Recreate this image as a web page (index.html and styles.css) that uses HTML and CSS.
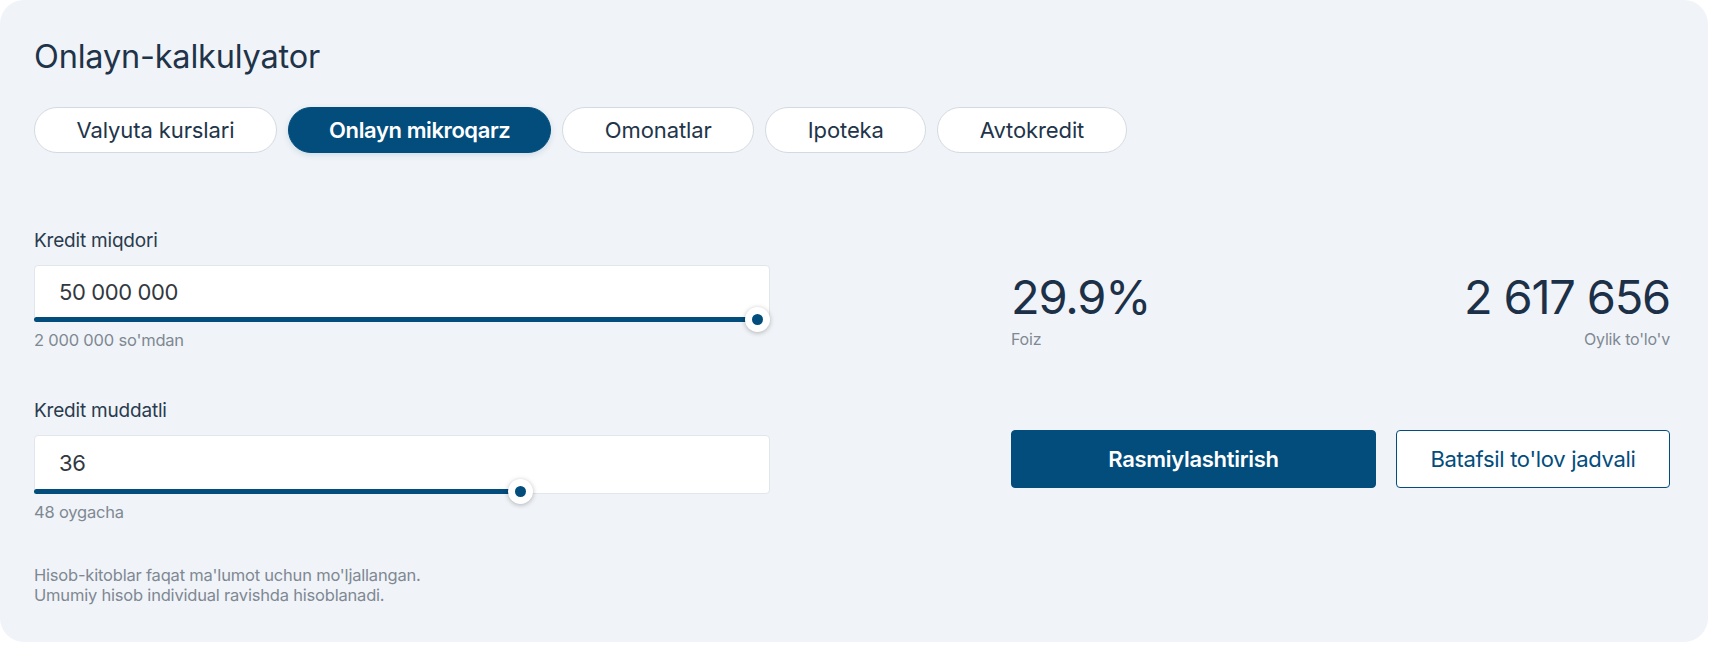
FILE: index.html
```html
<!DOCTYPE html>
<html lang="uz">
<head>
<meta charset="utf-8">
<title>Onlayn-kalkulyator</title>
<link rel="stylesheet" href="styles.css">
</head>
<body>
<section class="card">
  <h1 class="title">Onlayn-kalkulyator</h1>
  <nav class="tabs">
    <button class="tab">Valyuta kurslari</button>
    <button class="tab active">Onlayn mikroqarz</button>
    <button class="tab">Omonatlar</button>
    <button class="tab">Ipoteka</button>
    <button class="tab">Avtokredit</button>
  </nav>
  <div class="calc">
    <div class="inputs">
      <div class="field">
        <div class="label">Kredit miqdori</div>
        <div class="box">
          <span class="value">50 000 000</span>
          <div class="track"><div class="fill" style="width:98.4%"><span class="thumb"></span></div></div>
        </div>
        <div class="hint">2 000 000 so'mdan</div>
      </div>
      <div class="field">
        <div class="label">Kredit muddatli</div>
        <div class="box tall">
          <span class="value">36</span>
          <div class="track"><div class="fill" style="width:66.2%"><span class="thumb"></span></div></div>
        </div>
        <div class="hint">48 oygacha</div>
      </div>
      <p class="note">Hisob-kitoblar faqat ma'lumot uchun mo'ljallangan.<br>Umumiy hisob individual ravishda hisoblanadi.</p>
    </div>
    <div class="results">
      <div class="stats">
        <div class="stat">
          <div class="num">29.9%</div>
          <div class="cap">Foiz</div>
        </div>
        <div class="stat right">
          <div class="num">2 617 656</div>
          <div class="cap">Oylik to'lo'v</div>
        </div>
      </div>
      <div class="actions">
        <button class="btn primary">Rasmiylashtirish</button>
        <button class="btn outline">Batafsil to'lov jadvali</button>
      </div>
    </div>
  </div>
</section>
</body>
</html>
```
FILE: styles.css
```css
* { box-sizing: border-box; }
html, body { margin: 0; padding: 0; background: #ffffff; }
body { font-family: "Inter", "Noto Sans", sans-serif; color: #1d3147; }

.card {
  width: 1708px;
  height: 642px;
  background: #f0f4f8;
  border-radius: 24px;
  padding: 38px 38px 0 34px;
}

.title {
  margin: 0;
  font-size: 32.5px;
  line-height: 38px;
  font-weight: 400;
  color: #1f3349;
  letter-spacing: -0.2px;
}

.tabs {
  display: flex;
  gap: 11px;
  margin-top: 31px;
}
.tab {
  height: 46px;
  padding: 0 41.5px;
  border: 1px solid #d4dae1;
  border-radius: 23px;
  background: #ffffff;
  font-family: inherit;
  font-size: 22px;
  font-weight: 400;
  color: #223449;
  letter-spacing: -0.1px;
}
.tab.active {
  background: #024d7c;
  border-color: #024d7c;
  color: #ffffff;
  font-weight: 600;
  letter-spacing: -0.4px;
  padding: 0 40px;
  box-shadow: 0 2px 6px rgba(2, 77, 124, 0.15);
}

.calc {
  display: flex;
  justify-content: space-between;
  margin-top: 76px;
}

.inputs { width: 736px; }

.field { display: flex; flex-direction: column; }
.field + .field { margin-top: 49px; }

.label {
  font-size: 19px;
  line-height: 23px;
  color: #2a3b4e;
  letter-spacing: -0.2px;
}

.box {
  position: relative;
  margin-top: 13px;
  height: 57px;
  background: #ffffff;
  border: 1px solid #e1e6eb;
  border-radius: 4px;
  padding: 0 24px;
  display: flex;
  align-items: center;
}
.box.tall { height: 59px; }
.value {
  font-size: 22px;
  color: #33383f;
  letter-spacing: -0.4px;
  margin-top: -4px;
}

.track {
  position: absolute;
  left: -1px;
  right: -1px;
  bottom: -1px;
  height: 5px;
}
.fill {
  position: relative;
  height: 5px;
  background: #024d7c;
  border-radius: 3px 0 0 3px;
}
.thumb {
  position: absolute;
  right: -12px;
  top: -10px;
  width: 25px;
  height: 25px;
  border-radius: 50%;
  background: #ffffff;
  box-shadow: 0 1px 5px rgba(0, 0, 0, 0.28);
  display: flex;
  align-items: center;
  justify-content: center;
}
.thumb::after {
  content: "";
  width: 11px;
  height: 11px;
  border-radius: 50%;
  background: #024d7c;
}

.hint {
  margin-top: 8px;
  font-size: 16.5px;
  line-height: 20px;
  color: #7f8893;
  letter-spacing: -0.2px;
}

.note {
  margin: 43px 0 0;
  font-size: 16.5px;
  line-height: 20px;
  color: #7f8893;
  letter-spacing: -0.2px;
}

.results {
  width: 659px;
  padding-top: 43px;
}
.stats {
  display: flex;
  justify-content: space-between;
}
.stat.right { text-align: right; }
.num {
  font-size: 47px;
  line-height: 50px;
  font-weight: 400;
  color: #1c3048;
  letter-spacing: -1.2px;
}
.cap {
  margin-top: 7px;
  font-size: 16px;
  line-height: 20px;
  color: #7f8893;
  letter-spacing: -0.2px;
}

.actions {
  display: flex;
  gap: 20px;
  margin-top: 81px;
}
.btn {
  height: 58px;
  border-radius: 4px;
  font-family: inherit;
  font-size: 22px;
  letter-spacing: -0.3px;
}
.btn.primary {
  width: 365px;
  background: #024d7c;
  border: 1px solid #024d7c;
  color: #ffffff;
  font-weight: 600;
}
.btn.outline {
  flex: 1;
  background: #ffffff;
  border: 1px solid #024d7c;
  color: #024d7c;
  font-weight: 400;
}
```
